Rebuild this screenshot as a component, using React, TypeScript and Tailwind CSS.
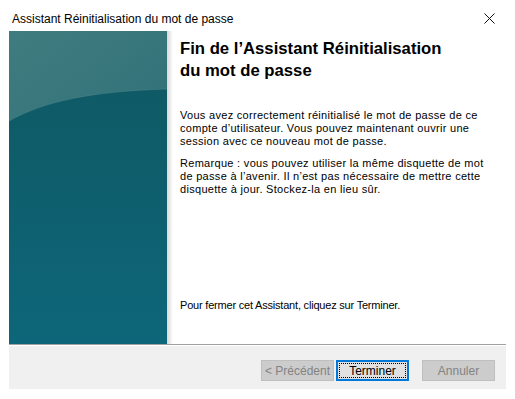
import React from "react";

const ui = { fontFamily: '"Liberation Sans", Arial, sans-serif' };

function SidePanel() {
  return (
    <div className="relative w-[158px] shrink-0">
      <svg className="absolute inset-0 h-full w-full" viewBox="0 0 158 313" preserveAspectRatio="none">
        <defs>
          <linearGradient id="top" x1="0" y1="0" x2="0.4" y2="1">
            <stop offset="0" stopColor="#3f7c80" />
            <stop offset="1" stopColor="#286b72" />
          </linearGradient>
          <linearGradient id="bot" x1="0" y1="0" x2="0" y2="1">
            <stop offset="0" stopColor="#0f5a66" />
            <stop offset="1" stopColor="#0d6679" />
          </linearGradient>
        </defs>
        <rect width="158" height="313" fill="url(#top)" />
        <path d="M0 90 C35 70 85 60 158 58 L158 313 L0 313 Z" fill="url(#bot)" />
        <path d="M0 90 C35 70 85 60 158 58" fill="none" stroke="#4e878b" strokeOpacity="0.5" strokeWidth="1" />
      </svg>
      <div className="absolute right-[-6px] top-0 h-full w-[6px] bg-gradient-to-r from-[#d8d8d8] to-white" />
    </div>
  );
}

function Btn({ label, disabled, primary }: { label: string; disabled?: boolean; primary?: boolean }) {
  if (primary) {
    return (
      <div className="flex h-[21px] w-[73px] items-center justify-center border-2 border-[#0078d7] bg-[#e1e1e1] p-[1px]">
        <div className="flex h-full w-full items-center justify-center border border-dotted border-black text-[12px] text-black">
          {label}
        </div>
      </div>
    );
  }
  return (
    <div
      className={
        "flex h-[21px] w-[73px] items-center justify-center border text-[12px] " +
        (disabled ? "border-[#bfbfbf] bg-[#cccccc] text-[#838383]" : "border-[#adadad] bg-[#e1e1e1] text-black")
      }
    >
      {label}
    </div>
  );
}

export default function App() {
  return (
    <div className="h-[399px] w-[515px] bg-white" style={ui}>
      <div className="flex h-[31px] items-start justify-between pl-[12px] pr-[20px] pt-[11px]">
        <span className="text-[12px] leading-[16px] text-black">Assistant Réinitialisation du mot de passe</span>
        <svg width="11" height="11" viewBox="0 0 11 11" className="mt-[2px]">
          <path d="M0.5 0.5 L10.5 10.5 M10.5 0.5 L0.5 10.5" stroke="#111" strokeWidth="1" />
        </svg>
      </div>
      <div className="mx-[9px] w-[497px]">
        <div className="flex h-[313px] bg-white">
          <SidePanel />
          <div className="flex flex-1 flex-col pl-[13px] pt-[7px] text-black">
            <h1 className="text-[16.7px] font-bold leading-[22px]">
              Fin de l’Assistant Réinitialisation
              <br />
              du mot de passe
            </h1>
            <div className="text-[11px] leading-[13px] tracking-[0.3px]">
              <p className="mt-[27px]">
                Vous avez correctement réinitialisé le mot de passe de ce
                <br />
                compte d’utilisateur. Vous pouvez maintenant ouvrir une
                <br />
                session avec ce nouveau mot de passe.
              </p>
              <p className="mt-[9px]">
                Remarque : vous pouvez utiliser la même disquette de mot
                <br />
                de passe à l’avenir. Il n’est pas nécessaire de mettre cette
                <br />
                disquette à jour. Stockez-la en lieu sûr.
              </p>
            </div>
            <p className="mt-auto mb-[32px] text-[11px] leading-[13px] tracking-[-0.2px]">
              Pour fermer cet Assistant, cliquez sur Terminer.
            </p>
          </div>
        </div>
        <div className="h-[2px] border-t border-[#a0a0a0] bg-white" />
        <div className="flex h-[43px] items-start justify-end bg-[#f0f0f0] pr-[11px] pt-[14px]">
          <Btn label="< Précédent" disabled />
          <div className="w-[2px]" />
          <Btn label="Terminer" primary />
          <div className="w-[13px]" />
          <Btn label="Annuler" disabled />
        </div>
      </div>
    </div>
  );
}
